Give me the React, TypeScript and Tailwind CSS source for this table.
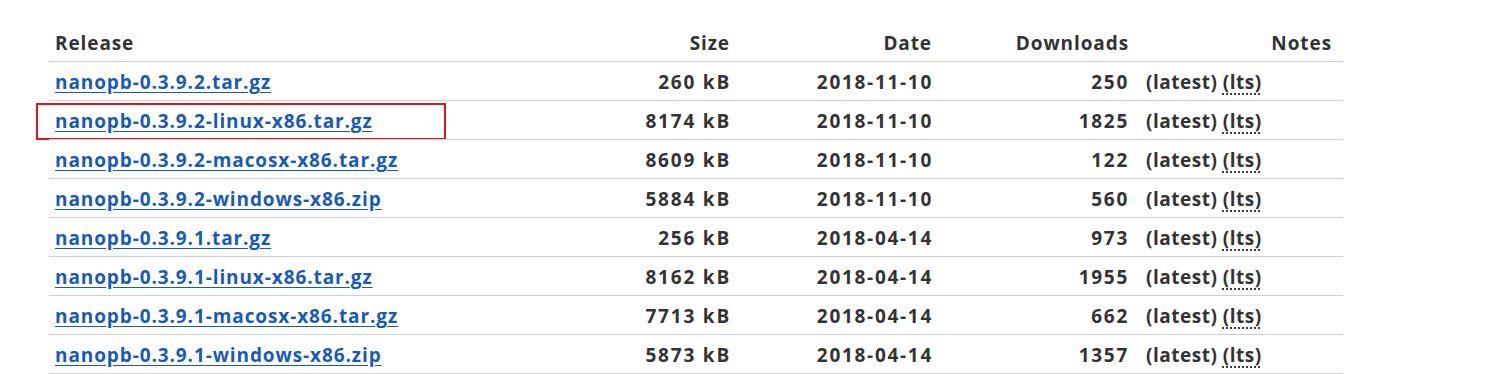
const releases = [
  { name: "nanopb-0.3.9.2.tar.gz", size: "260 kB", date: "2018-11-10", downloads: 250 },
  { name: "nanopb-0.3.9.2-linux-x86.tar.gz", size: "8174 kB", date: "2018-11-10", downloads: 1825, marked: true },
  { name: "nanopb-0.3.9.2-macosx-x86.tar.gz", size: "8609 kB", date: "2018-11-10", downloads: 122 },
  { name: "nanopb-0.3.9.2-windows-x86.zip", size: "5884 kB", date: "2018-11-10", downloads: 560 },
  { name: "nanopb-0.3.9.1.tar.gz", size: "256 kB", date: "2018-04-14", downloads: 973 },
  { name: "nanopb-0.3.9.1-linux-x86.tar.gz", size: "8162 kB", date: "2018-04-14", downloads: 1955 },
  { name: "nanopb-0.3.9.1-macosx-x86.tar.gz", size: "7713 kB", date: "2018-04-14", downloads: 662 },
  { name: "nanopb-0.3.9.1-windows-x86.zip", size: "5873 kB", date: "2018-04-14", downloads: 1357 },
];

const cols = "grid grid-cols-[551px_135px_202px_196px_210px]";

export default function App() {
  return (
    <div
      className="min-h-[374px] bg-white pt-[22px] pl-[49px] text-[19px] font-bold tracking-[0.9px] text-[#333]"
      style={{ fontFamily: '"Open Sans", "Noto Sans CJK SC", sans-serif' }}
    >
      <div className="w-[1294px] border-b border-[#cfcfcf]">
        <div className={`${cols} h-[39px] pt-[4px] leading-[35px]`}>
          <div className="pl-[6px]">Release</div>
          <div className="pr-[5px] text-right">Size</div>
          <div className="pr-[5px] text-right">Date</div>
          <div className="pr-[4px] text-right">Downloads</div>
          <div className="pr-[11px] text-right">Notes</div>
        </div>
        {releases.map((r) => (
          <div
            key={r.name}
            className={`${cols} relative h-[39px] border-t border-[#cfcfcf] pt-[2px] leading-[36px]`}
          >
            <div className="pl-[6px] whitespace-nowrap">
              <a href="#" className="text-[#185ab8] underline underline-offset-[3px]">
                {r.name}
              </a>
            </div>
            <div className="pr-[4px] text-right tracking-[1.8px]">{r.size}</div>
            <div className="pr-[4px] text-right tracking-[1.7px]">{r.date}</div>
            <div className="pr-[4px] text-right tracking-[1.7px]">{r.downloads}</div>
            <div className="pl-[13px] whitespace-nowrap tracking-[0.5px]">
              (latest){" "}
              <abbr title="Long-term support" className="underline decoration-dotted underline-offset-[5px]">
                (lts)
              </abbr>
            </div>
            {r.marked && (
              <div className="pointer-events-none absolute top-[2px] left-[-13px] h-[37px] w-[410px] border-2 border-[#e5141f]" />
            )}
          </div>
        ))}
      </div>
    </div>
  );
}
